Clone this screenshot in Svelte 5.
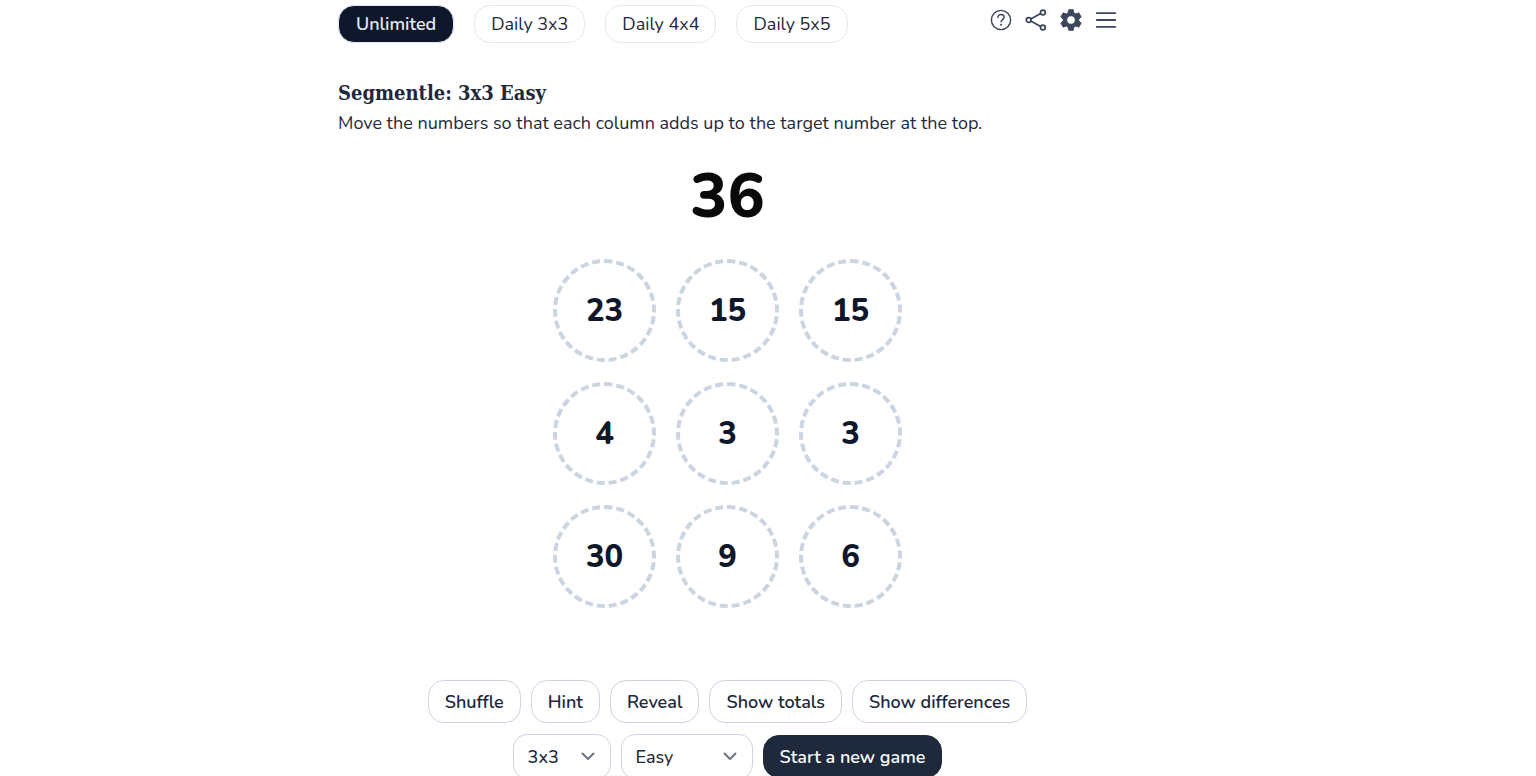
<script>
  const modes = ["Unlimited", "Daily 3x3", "Daily 4x4", "Daily 5x5"];
  const actions = ["Shuffle", "Hint", "Reveal", "Show totals", "Show differences"];
  const sizes = ["3x3", "4x4", "5x5"];
  const levels = ["Easy", "Medium", "Hard"];

  let mode = "Unlimited";
  let size = "3x3";
  let level = "Easy";
  let target = 36;
  let numbers = [23, 15, 15, 4, 3, 3, 30, 9, 6];
</script>

<div class="page">
  <header>
    <nav>
      {#each modes as item}
        <button class="mode" class:active={item === mode} on:click={() => (mode = item)}>
          {item}
        </button>
      {/each}
    </nav>
    <div class="icons">
      <button aria-label="Help">
        <svg viewBox="0 0 24 24" fill="none" stroke="currentColor" stroke-width="1.6">
          <circle cx="12" cy="12" r="10.5" />
          <path d="M8.6 9.2c0-1.9 1.4-3.2 3.4-3.2 1.9 0 3.4 1.2 3.4 3 0 2.5-3.3 2.5-3.3 5" stroke-linecap="round" />
          <circle cx="12" cy="17.3" r="1.1" fill="currentColor" stroke="none" />
        </svg>
      </button>
      <button aria-label="Share">
        <svg viewBox="0 0 24 24" fill="none" stroke="currentColor" stroke-width="1.9">
          <circle cx="4" cy="12" r="2.6" />
          <circle cx="19.5" cy="3.7" r="2.6" />
          <circle cx="19.5" cy="20.3" r="2.6" />
          <path d="M6.3 10.8l10.9-5.8M6.3 13.2l10.9 5.8" />
        </svg>
      </button>
      <button aria-label="Settings">
        <svg viewBox="0 0 24 24" fill="currentColor" stroke="currentColor" stroke-width="1" stroke-linejoin="round">
          <path
            fill-rule="evenodd"
            d="M9.5.8h5l.7 3.5 2 1.1 3.3-1.2 2.6 4.4-2.6 2.3v2.2l2.6 2.3-2.6 4.4-3.3-1.2-2 1.1-.7 3.500h-5l-.7-3.500-2-1.100-3.300 1.200-2.600-4.400 2.600-2.300v-2.200L.9 8.600l2.600-4.400 3.300 1.200 2-1.100zM12 7.300a4.700 4.700 0 1 0 0 9.400 4.700 4.700 0 0 0 0-9.400z"
          />
        </svg>
      </button>
      <button aria-label="Menu">
        <svg viewBox="0 0 24 24" fill="none" stroke="currentColor" stroke-width="2" stroke-linecap="round">
          <path d="M2 4.500h20M2 12h20M2 19.500h20" />
        </svg>
      </button>
    </div>
  </header>

  <main>
    <h1>Segmentle: {size} {level}</h1>
    <p>Move the numbers so that each column adds up to the target number at the top.</p>

    <div class="target">{target}</div>
    <div class="board">
      {#each numbers as number}
        <button class="cell">{number}</button>
      {/each}
    </div>

    <div class="controls">
      {#each actions as action}
        <button class="action">{action}</button>
      {/each}
    </div>
    <div class="controls">
      <div class="select">
        <select aria-label="Size" bind:value={size}>
          {#each sizes as option}
            <option>{option}</option>
          {/each}
        </select>
        <svg viewBox="0 0 16 16"><path d="M2.5 5.5l5.5 5.5 5.5-5.5" /></svg>
      </div>
      <div class="select wide">
        <select aria-label="Difficulty" bind:value={level}>
          {#each levels as option}
            <option>{option}</option>
          {/each}
        </select>
        <svg viewBox="0 0 16 16"><path d="M2.5 5.5l5.5 5.5 5.5-5.5" /></svg>
      </div>
      <button class="action start">Start a new game</button>
    </div>
  </main>
</div>

<style>
  :global(body) {
    background: #fff;
    overflow-x: hidden;
  }

  .page {
    box-sizing: border-box;
    padding: 5px 81px 0 0;

    color: #1e293b;
    font-family: Nunito, "Open Sans", sans-serif;
    font-size: 18px;
    line-height: 24px;
  }

  header,
  main {
    max-width: 779px;
    margin: 0 auto;
  }

  header {
    display: flex;
    justify-content: space-between;
    align-items: flex-start;
  }

  nav {
    display: flex;
    gap: 20px;
  }

  button,
  select {
    box-sizing: border-box;

    color: inherit;
    font: inherit;
    background: #fff;
    cursor: pointer;
  }

  .mode {
    height: 38px;
    padding: 0 16px;

    border: 1px solid #e2e8f0;
    border-radius: 16px;
  }

  .mode.active {
    padding: 0 17px;

    color: #e2e8f0;
    font-weight: 600;
    background: #0f172a;
  }

  .icons {
    display: flex;
    gap: 13px;
    padding: 4px 0;
  }

  .icons button {
    display: flex;
    padding: 0;

    color: #3b475a;
    background: none;
    border: none;
  }

  .icons svg {
    width: 22px;
    height: 22px;
  }

  h1 {
    margin: 36px 0 0;

    font-family: "DejaVu Serif Condensed", "DejaVu Serif", serif;
    font-size: 20px;
    font-weight: 700;
    line-height: 28px;
  }

  p {
    margin: 4px 0 0;
  }

  .target {
    margin-top: 26px;

    color: #0a0a0a;
    font-size: 62px;
    font-weight: 800;
    line-height: 72px;
    text-align: center;
  }

  .board {
    display: grid;
    grid-template-columns: repeat(3, 103px);
    justify-content: center;
    gap: 20px;
    margin: 26px 0 72px;
  }

  .cell {
    height: 103px;
    padding: 0;

    color: #0f172a;
    font-size: 31px;
    font-weight: 800;
    border: 4px dashed #cbd5e1;
    border-radius: 50%;
  }

  .controls {
    display: flex;
    justify-content: center;
    gap: 10px;
    margin-bottom: 11px;
  }

  .action {
    height: 43px;
    padding: 0 16px;

    font-weight: 600;
    border: 1px solid #cbd5e1;
    border-radius: 16px;
  }

  .start {
    margin-top: 1px;

    color: #f8fafc;
    background: #1e293b;
    border-color: #1e293b;
  }

  .select {
    position: relative;
    width: 98px;
  }

  .select.wide {
    width: 132px;
  }

  select {
    width: 100%;
    height: 45px;
    padding: 0 14px;

    font-weight: 500;
    appearance: none;
    border: 1px solid #cbd5e1;
    border-radius: 14px;
  }

  .select svg {
    position: absolute;
    top: 14px;
    right: 15px;
    width: 16px;
    height: 16px;

    fill: none;
    stroke: #6b7280;
    stroke-width: 2;
    stroke-linecap: round;
    stroke-linejoin: round;
    pointer-events: none;
  }
</style>
